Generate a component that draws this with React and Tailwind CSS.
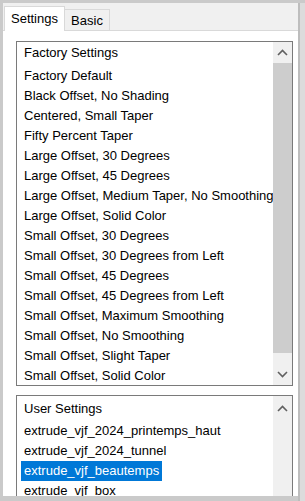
import React from "react";

const factory = [
  "Factory Default",
  "Black Offset, No Shading",
  "Centered, Small Taper",
  "Fifty Percent Taper",
  "Large Offset, 30 Degrees",
  "Large Offset, 45 Degrees",
  "Large Offset, Medium Taper, No Smoothing",
  "Large Offset, Solid Color",
  "Small Offset, 30 Degrees",
  "Small Offset, 30 Degrees from Left",
  "Small Offset, 45 Degrees",
  "Small Offset, 45 Degrees from Left",
  "Small Offset, Maximum Smoothing",
  "Small Offset, No Smoothing",
  "Small Offset, Slight Taper",
  "Small Offset, Solid Color",
];

const user = [
  "extrude_vjf_2024_printemps_haut",
  "extrude_vjf_2024_tunnel",
  "extrude_vjf_beautemps",
  "extrude_vjf_box",
];

function Chevron({ up }) {
  return (
    <svg width="11" height="7" viewBox="0 0 11 7" className="block">
      <path
        d={up ? "M1 6 L5.5 1.5 L10 6" : "M1 1 L5.5 5.5 L10 1"}
        fill="none"
        stroke="#606060"
        strokeWidth="1.6"
      />
    </svg>
  );
}

function Row({ children, selected }) {
  return (
    <div className="h-5 flex items-center pl-1 whitespace-nowrap">
      <span
        className={
          selected ? "bg-[#0078d7] text-white px-[3px] leading-5" : "px-[3px] leading-5"
        }
      >
        {children}
      </span>
    </div>
  );
}

export default function App() {
  return (
    <div
      className="w-[305px] h-[501px] bg-[#cacaca] pt-[3px] pl-[3px] flex overflow-hidden text-[13px] text-black"
      style={{ fontFamily: '"Liberation Sans", Arial, sans-serif' }}
    >
      <div className="w-[295px] h-[493px] bg-white flex flex-col">
        {/* tab strip */}
        <div className="h-[28px] bg-[#f0f0f0] flex items-end pl-[1px] border-b border-[#d9d9d9] shrink-0">
          <div className="h-[25px] w-[61px] bg-white border border-b-0 border-[#d9d9d9] -mb-px flex items-center justify-center pb-[1px]">
            Settings
          </div>
          <div className="h-[21px] w-[45px] bg-[#f0f0f0] border border-l-0 border-b-0 border-[#d9d9d9] flex items-center justify-center pt-[1px]">
            Basic
          </div>
        </div>

        <div className="flex-1 overflow-hidden pl-[13px] pt-[10px]">
          {/* factory list */}
          <div className="w-[277px] h-[345px] border border-[#7a7a7a] flex">
            <div className="flex-1 overflow-hidden">
              <div className="h-[24px] flex items-center pl-[4px] pb-[2px]">
                <span className="px-[3px]">Factory Settings</span>
              </div>
              {factory.map((f) => (
                <Row key={f}>{f}</Row>
              ))}
            </div>
            <div className="w-[19px] bg-[#f0f0f0] flex flex-col items-center">
              <div className="h-[21px] flex items-center justify-center">
                <Chevron up />
              </div>
              <div className="w-full h-[290px] bg-[#cdcdcd]" />
              <div className="flex-1" />
              <div className="h-[21px] flex items-center justify-center">
                <Chevron />
              </div>
            </div>
          </div>

          {/* user list */}
          <div className="w-[277px] h-[120px] mt-[9px] border border-[#7a7a7a] flex">
            <div className="flex-1 overflow-hidden">
              <div className="h-[25px] flex items-center pl-[4px]">
                <span className="px-[3px]">User Settings</span>
              </div>
              {user.map((u) => (
                <Row key={u} selected={u === "extrude_vjf_beautemps"}>
                  {u}
                </Row>
              ))}
            </div>
            <div className="w-[19px] bg-[#f0f0f0] flex flex-col items-center">
              <div className="h-[25px] flex items-center justify-center">
                <Chevron up />
              </div>
            </div>
          </div>
        </div>
      </div>
      <div className="w-[2px] h-full bg-[#bdbdbd]" />
      <div className="flex-1 h-full bg-[#dcdcdc]" />
    </div>
  );
}
